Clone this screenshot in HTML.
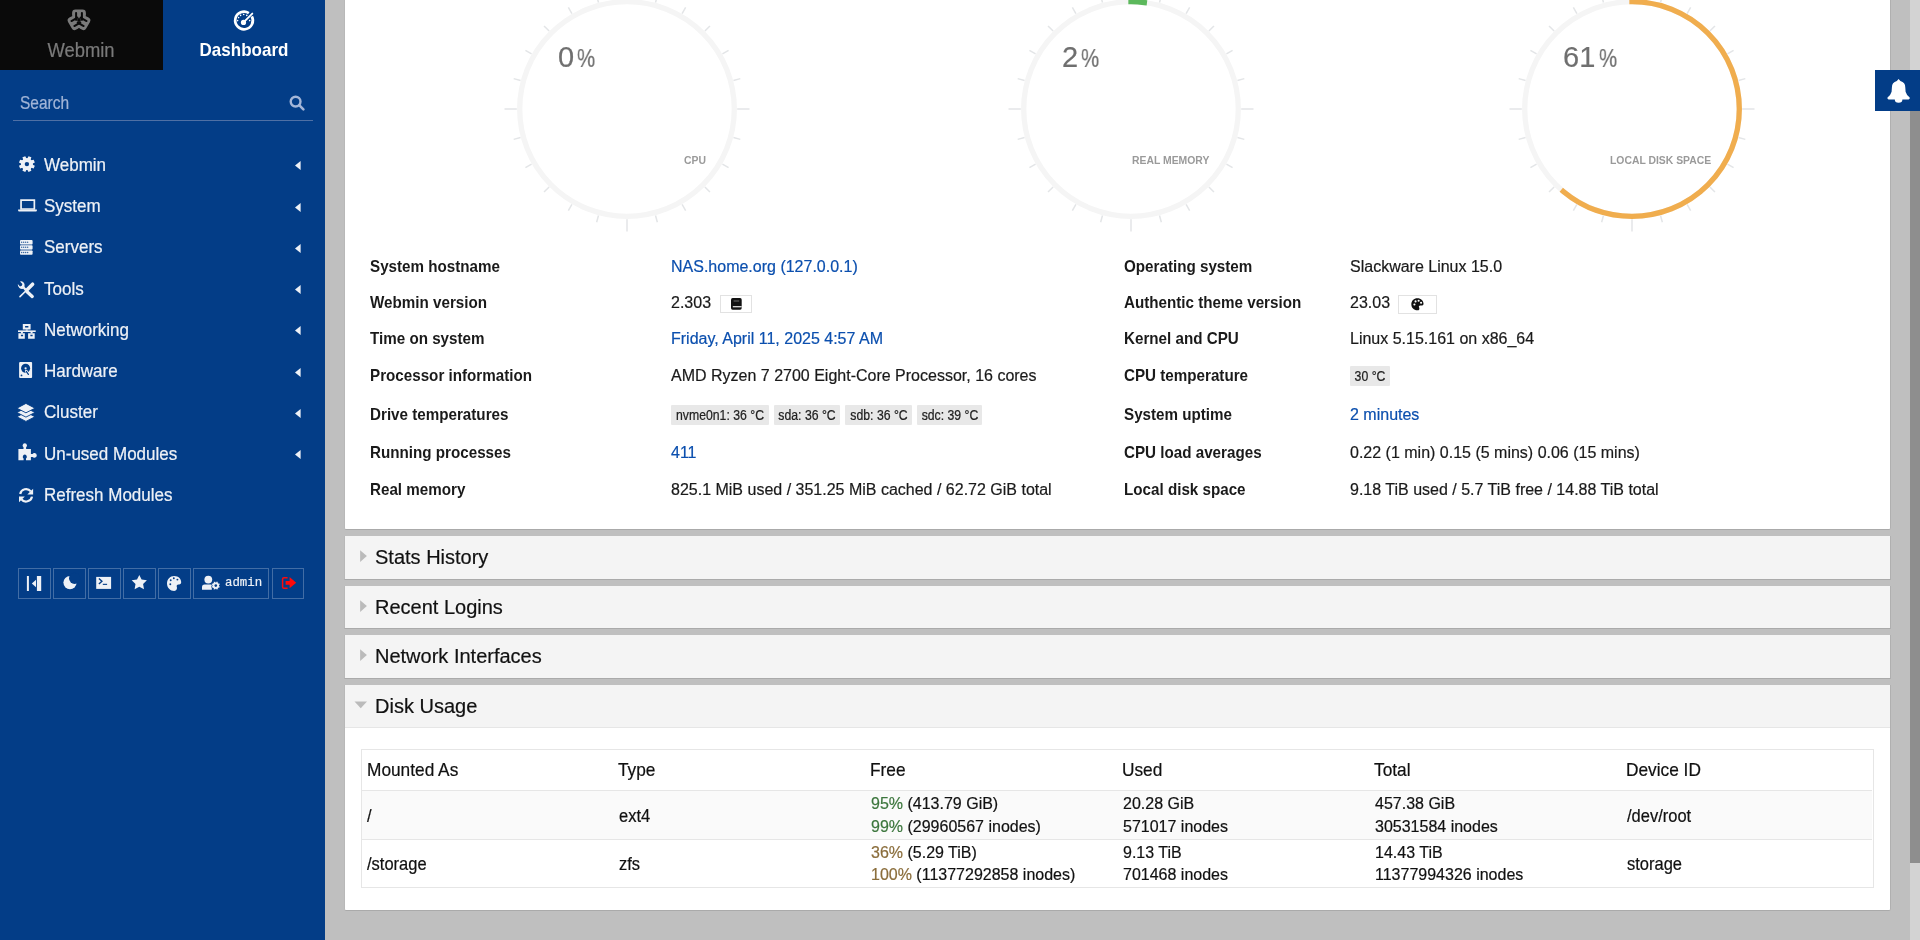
<!DOCTYPE html>
<html><head><meta charset="utf-8"><title>Dashboard</title>
<style>
html,body{margin:0;padding:0;width:1920px;height:940px;overflow:hidden;background:#bfbfbf;font-family:"Liberation Sans", sans-serif;}
.r{position:absolute;box-sizing:content-box;}
.t{position:absolute;white-space:nowrap;font-family:"Liberation Sans", sans-serif;will-change:transform;-webkit-text-stroke:0.2px currentColor;}
.t[style*="font-weight:bold"]{-webkit-text-stroke:0;}
svg.r{overflow:visible}
</style></head><body>
<div class="r" style="left:0;top:0;width:325px;height:940px;background:#033d87"></div><div class="r" style="left:0;top:0;width:163px;height:70px;background:#0a0a0a"></div><div class="t" style="left:-118.80px;width:400px;text-align:center;top:42px;font-size:18.4px;line-height:18.4px;color:#7a7a7a;font-weight:normal;transform:scaleY(1.1);transform-origin:0 15px;">Webmin</div><div class="t" style="left:44.00px;width:400px;text-align:center;top:42px;font-size:17px;line-height:17px;color:#ffffff;font-weight:bold;transform:scaleY(1.12);transform-origin:0 14px;">Dashboard</div><svg class="r" style="left:59px;top:-0.2px" width="40" height="40" viewBox="-20 -20 40 40"><g fill="#7a7a7a"><circle r="4.6"/><g transform="rotate(0)"><rect x="-6.9" y="-10.5" width="13.8" height="8.6" rx="3.4"/><rect x="-5.6" y="-6" width="11.2" height="6" /></g><g transform="rotate(120)"><rect x="-6.9" y="-10.5" width="13.8" height="8.6" rx="3.4"/><rect x="-5.6" y="-6" width="11.2" height="6" /></g><g transform="rotate(240)"><rect x="-6.9" y="-10.5" width="13.8" height="8.6" rx="3.4"/><rect x="-5.6" y="-6" width="11.2" height="6" /></g></g><g fill="#0a0a0a"><circle r="1.9"/><g transform="rotate(0)"><rect x="-3.9" y="-8" width="2" height="8.8" rx="0.9"/><rect x="1.9" y="-8" width="2" height="8.8" rx="0.9"/></g><g transform="rotate(120)"><rect x="-3.9" y="-8" width="2" height="8.8" rx="0.9"/><rect x="1.9" y="-8" width="2" height="8.8" rx="0.9"/></g><g transform="rotate(240)"><rect x="-3.9" y="-8" width="2" height="8.8" rx="0.9"/><rect x="1.9" y="-8" width="2" height="8.8" rx="0.9"/></g></g></svg><svg class="r" style="left:225px;top:0px" width="40" height="40" viewBox="225 0 40 40"><path d="M251.86 16.30 A8.85 8.85 0 1 1 248.87 13.03" fill="none" stroke="#fff" stroke-width="2.7"/><circle cx="243.5" cy="22.4" r="2.6" fill="#fff"/><path d="M243.5 22.4 L252.3 13.6" stroke="#fff" stroke-width="1.9" stroke-linecap="round"/><circle cx="237.6" cy="20.6" r="0.8" fill="#fff"/><circle cx="238.6" cy="17.6" r="0.8" fill="#fff"/><circle cx="240.6" cy="15.4" r="0.8" fill="#fff"/><circle cx="243.7" cy="14.5" r="0.8" fill="#fff"/><circle cx="246.8" cy="15.4" r="0.8" fill="#fff"/><circle cx="249.7" cy="20.6" r="0.8" fill="#fff"/></svg><div class="t" style="left:20.00px;top:96px;font-size:15.5px;line-height:15.5px;color:#a2b5d7;font-weight:normal;transform:scaleY(1.15);transform-origin:0 13px;">Search</div><div class="r" style="left:13px;top:120px;width:300px;height:1px;background:#4f70a5"></div><svg class="r" style="left:289px;top:95px" width="16" height="16" viewBox="0 0 16 16">
<circle cx="6.6" cy="6.6" r="4.9" fill="none" stroke="#a4b6d8" stroke-width="2.4"/>
<path d="M10.2 10.2 L14.4 14.4" stroke="#a4b6d8" stroke-width="2.6" stroke-linecap="round"/></svg><svg class="r" style="left:0;top:0" width="325" height="620" viewBox="0 0 325 620"><path fill-rule="evenodd" fill="#eef1f6" d="M27.47 158.23 L28.51 156.16 L31.37 157.35 L30.65 159.55 L31.45 160.35 L33.65 159.63 L34.84 162.49 L32.77 163.53 L32.77 164.67 L34.84 165.71 L33.65 168.57 L31.45 167.85 L30.65 168.65 L31.37 170.85 L28.51 172.04 L27.47 169.97 L26.33 169.97 L25.29 172.04 L22.43 170.85 L23.15 168.65 L22.35 167.85 L20.15 168.57 L18.96 165.71 L21.03 164.67 L21.03 163.53 L18.96 162.49 L20.15 159.63 L22.35 160.35 L23.15 159.55 L22.43 157.35 L25.29 156.16 L26.33 158.23 Z M29.20 164.10 A2.3 2.3 0 1 0 24.60 164.10 A2.3 2.3 0 1 0 29.20 164.10 Z"/><circle cx="26.9" cy="164.1" r="5.9" fill="#eef1f6"/><circle cx="26.9" cy="164.1" r="2.2" fill="#033d87"/><path fill="#eef1f6" fill-rule="evenodd" d="M20.2 199.2 H35.2 V209.8 H20.2 Z M21.9 200.9 V208.2 H33.5 V200.9 Z"/><path fill="#eef1f6" d="M18.1 209.6 H36.9 V210.6 Q36.9 211.6 35.9 211.6 H19.1 Q18.1 211.6 18.1 210.6 Z"/><rect x="20" y="240" width="12.6" height="4.3" rx="0.9" fill="#eef1f6"/><circle cx="21.6" cy="242.15" r="0.75" fill="#033d87" opacity="0.75"/><circle cx="23.6" cy="242.15" r="0.75" fill="#033d87" opacity="0.75"/><circle cx="25.6" cy="242.15" r="0.75" fill="#033d87" opacity="0.75"/><circle cx="27.6" cy="242.15" r="0.75" fill="#033d87" opacity="0.75"/><rect x="20" y="245.2" width="12.6" height="4.3" rx="0.9" fill="#eef1f6"/><circle cx="21.6" cy="247.35" r="0.75" fill="#033d87" opacity="0.75"/><circle cx="23.6" cy="247.35" r="0.75" fill="#033d87" opacity="0.75"/><circle cx="25.6" cy="247.35" r="0.75" fill="#033d87" opacity="0.75"/><circle cx="27.6" cy="247.35" r="0.75" fill="#033d87" opacity="0.75"/><rect x="20" y="250.4" width="12.6" height="4.3" rx="0.9" fill="#eef1f6"/><circle cx="21.6" cy="252.55" r="0.75" fill="#033d87" opacity="0.75"/><circle cx="23.6" cy="252.55" r="0.75" fill="#033d87" opacity="0.75"/><circle cx="25.6" cy="252.55" r="0.75" fill="#033d87" opacity="0.75"/><circle cx="27.6" cy="252.55" r="0.75" fill="#033d87" opacity="0.75"/><rect x="20.5" y="244.3" width="11.6" height="0.9" fill="#eef1f6" opacity="0.55"/><rect x="20.5" y="249.5" width="11.6" height="0.9" fill="#eef1f6" opacity="0.55"/><line x1="32.6" y1="284.2" x2="26.6" y2="290.2" stroke="#eef1f6" stroke-width="3.6" stroke-linecap="round"/><line x1="26.8" y1="290" x2="20" y2="296.6" stroke="#eef1f6" stroke-width="1.6" stroke-linecap="round"/><line x1="26.8" y1="291.6" x2="32.2" y2="296.4" stroke="#eef1f6" stroke-width="3.4" stroke-linecap="round"/><path fill="#eef1f6" d="M24.8 290.4 L26.4 288.8 L24.6 287 Q25.4 284 23.4 282.2 Q21.6 280.9 20 281.6 L22.4 284 L21.8 285.8 L20 286.4 L17.8 284 Q17.6 286.6 19.4 288 Q21 289.2 23.2 288.8 Z"/><path fill="#eef1f6" fill-rule="evenodd" d="M22.8 324 H30.6 V329.6 H22.8 Z M25.1 326 V327.6 H28.4 V326 Z"/><rect x="25.8" y="329.4" width="2" height="1.4" fill="#eef1f6" opacity="0.8"/><rect x="18" y="330.4" width="17.7" height="1.6" fill="#eef1f6"/><rect x="20.9" y="331.8" width="2" height="1.6" fill="#eef1f6"/><rect x="30.6" y="331.8" width="2" height="1.6" fill="#eef1f6"/><path fill="#eef1f6" fill-rule="evenodd" d="M18.4 333.2 H24.8 V338.7 H18.4 Z M20.9 334.8 V336.3 H23.1 V334.8 Z"/><path fill="#eef1f6" fill-rule="evenodd" d="M28.1 333.2 H34.7 V338.7 H28.1 Z M30.4 334.8 V336.3 H32.6 V334.8 Z"/><rect x="19.1" y="362" width="13" height="15.9" rx="1" fill="#eef1f6"/><circle cx="25.6" cy="368.3" r="4.5" fill="#033d87"/><circle cx="25.6" cy="368.3" r="1.1" fill="#eef1f6"/><line x1="26.2" y1="371" x2="28.6" y2="374.6" stroke="#eef1f6" stroke-width="2.6" stroke-linecap="round"/><line x1="26.3" y1="371.4" x2="28.4" y2="374.4" stroke="#033d87" stroke-width="1.2" stroke-linecap="round"/><circle cx="21.5" cy="375.4" r="0.9" fill="#033d87"/><path fill="#eef1f6" stroke="#033d87" stroke-width="0.9" d="M25.95 412.00 L35 416.80 L25.95 421.40 L16.9 416.80 Z"/><path fill="#eef1f6" stroke="#033d87" stroke-width="0.9" d="M25.95 407.70 L35 412.50 L25.95 417.10 L16.9 412.50 Z"/><path fill="#eef1f6" stroke="#033d87" stroke-width="0.9" d="M25.95 403.40 L35 408.20 L25.95 412.80 L16.9 408.20 Z"/><path fill="#eef1f6" d="M18.4 448.9 H23.5 V447.2 Q22.4 446.4 22.6 445.2 Q23 443.2 24.8 443.2 Q26.6 443.2 27 445.2 Q27.2 446.4 26.1 447.2 V448.9 H30.9 V453.9 H32.6 Q33.2 453 34.6 453.1 Q36.8 453.4 36.8 455.4 Q36.8 457.4 34.6 457.7 Q33.2 457.8 32.6 456.9 H30.9 V460.3 H26 V458.6 Q27 457.9 26.8 456.6 Q26.4 454.4 24.8 454.4 Q23.2 454.4 22.8 456.6 Q22.6 457.9 23.6 458.6 V460.3 H18.4 Z"/><path fill="none" stroke="#eef1f6" stroke-width="2.2" d="M20.2 494 A6 6 0 0 1 30.8 491.4"/><path fill="none" stroke="#eef1f6" stroke-width="2.2" d="M32 496.6 A6 6 0 0 1 21.4 499.2"/><path fill="#eef1f6" d="M33.1 488.8 V494.6 H27.3 Z"/><path fill="#eef1f6" d="M19 502.2 V496.4 H24.8 Z"/></svg><div class="t" style="left:44.00px;top:157px;font-size:17px;line-height:17px;color:#eef1f6;font-weight:normal;transform:scaleY(1.1);transform-origin:0 14px;">Webmin</div><svg class="r" style="left:294.5px;top:161.40px" width="6" height="9" viewBox="0 0 6 9"><path d="M5.6 0 V9 L0 4.5 Z" fill="#eef1f6"/></svg><div class="t" style="left:44.00px;top:198px;font-size:17px;line-height:17px;color:#eef1f6;font-weight:normal;transform:scaleY(1.1);transform-origin:0 14px;">System</div><svg class="r" style="left:294.5px;top:202.64px" width="6" height="9" viewBox="0 0 6 9"><path d="M5.6 0 V9 L0 4.5 Z" fill="#eef1f6"/></svg><div class="t" style="left:44.00px;top:239px;font-size:17px;line-height:17px;color:#eef1f6;font-weight:normal;transform:scaleY(1.1);transform-origin:0 14px;">Servers</div><svg class="r" style="left:294.5px;top:243.88px" width="6" height="9" viewBox="0 0 6 9"><path d="M5.6 0 V9 L0 4.5 Z" fill="#eef1f6"/></svg><div class="t" style="left:44.00px;top:281px;font-size:17px;line-height:17px;color:#eef1f6;font-weight:normal;transform:scaleY(1.1);transform-origin:0 14px;">Tools</div><svg class="r" style="left:294.5px;top:285.12px" width="6" height="9" viewBox="0 0 6 9"><path d="M5.6 0 V9 L0 4.5 Z" fill="#eef1f6"/></svg><div class="t" style="left:44.00px;top:322px;font-size:17px;line-height:17px;color:#eef1f6;font-weight:normal;transform:scaleY(1.1);transform-origin:0 14px;">Networking</div><svg class="r" style="left:294.5px;top:326.36px" width="6" height="9" viewBox="0 0 6 9"><path d="M5.6 0 V9 L0 4.5 Z" fill="#eef1f6"/></svg><div class="t" style="left:44.00px;top:363px;font-size:17px;line-height:17px;color:#eef1f6;font-weight:normal;transform:scaleY(1.1);transform-origin:0 14px;">Hardware</div><svg class="r" style="left:294.5px;top:367.60px" width="6" height="9" viewBox="0 0 6 9"><path d="M5.6 0 V9 L0 4.5 Z" fill="#eef1f6"/></svg><div class="t" style="left:44.00px;top:404px;font-size:17px;line-height:17px;color:#eef1f6;font-weight:normal;transform:scaleY(1.1);transform-origin:0 14px;">Cluster</div><svg class="r" style="left:294.5px;top:408.84px" width="6" height="9" viewBox="0 0 6 9"><path d="M5.6 0 V9 L0 4.5 Z" fill="#eef1f6"/></svg><div class="t" style="left:44.00px;top:446px;font-size:17px;line-height:17px;color:#eef1f6;font-weight:normal;transform:scaleY(1.1);transform-origin:0 14px;">Un-used Modules</div><svg class="r" style="left:294.5px;top:450.08px" width="6" height="9" viewBox="0 0 6 9"><path d="M5.6 0 V9 L0 4.5 Z" fill="#eef1f6"/></svg><div class="t" style="left:44.00px;top:487px;font-size:17px;line-height:17px;color:#eef1f6;font-weight:normal;transform:scaleY(1.1);transform-origin:0 14px;">Refresh Modules</div><div class="r" style="left:18px;top:568px;width:31px;height:29px;border:1px solid rgba(255,255,255,0.25)"></div><div class="r" style="left:53px;top:568px;width:31px;height:29px;border:1px solid rgba(255,255,255,0.25)"></div><div class="r" style="left:88px;top:568px;width:31px;height:29px;border:1px solid rgba(255,255,255,0.25)"></div><div class="r" style="left:123px;top:568px;width:31px;height:29px;border:1px solid rgba(255,255,255,0.25)"></div><div class="r" style="left:158px;top:568px;width:31px;height:29px;border:1px solid rgba(255,255,255,0.25)"></div><div class="r" style="left:193px;top:568px;width:74px;height:29px;border:1px solid rgba(255,255,255,0.25)"></div><div class="r" style="left:272px;top:568px;width:30px;height:29px;border:1px solid rgba(255,255,255,0.25)"></div><svg class="r" style="left:0;top:0" width="325" height="620" viewBox="0 0 325 620"><rect x="26.9" y="576" width="2" height="15" fill="#eef1f6"/><rect x="36.9" y="576" width="4.3" height="15" fill="#eef1f6"/><path d="M31.8 583.5 L36 579.8 V587.2 Z" fill="#eef1f6"/><circle cx="70" cy="582.6" r="6.6" fill="#eef1f6"/><circle cx="74.6" cy="578.3" r="5.6" fill="#033d87"/><rect x="96.2" y="576.9" width="14.9" height="12" fill="#eef1f6"/><path d="M98.9 578.5 L101.9 581.2 L98.9 583.9" fill="none" stroke="#033d87" stroke-width="1.4"/><rect x="102.8" y="583.8" width="4.3" height="1.1" fill="#033d87"/><path fill="#eef1f6" d="M139.3 574.9 L141.6 579.6 L146.9 580.3 L143.1 583.9 L144 589.2 L139.3 586.7 L134.6 589.2 L135.5 583.9 L131.7 580.3 L137 579.6 Z"/><path fill="#eef1f6" d="M174.2 576 C178.4 576 181.2 578.8 181.2 582.2 C181.2 584.2 179.6 584.4 178.4 584.4 C177 584.4 176.4 585.4 176.8 586.8 C177.4 588.6 176.6 591 174.2 591 C170.2 591 167 587.6 167 583.5 C167 579.4 170 576 174.2 576 Z"/><circle cx="170.3" cy="584.2" r="0.95" fill="#033d87"/><circle cx="170.7" cy="580.2" r="0.95" fill="#033d87"/><circle cx="173.8" cy="578.2" r="0.95" fill="#033d87"/><circle cx="177.4" cy="579.6" r="0.95" fill="#033d87"/><circle cx="208.3" cy="579.6" r="3.9" fill="#eef1f6"/><path fill="#eef1f6" d="M202 589.8 V587 Q202 584.4 204.6 584.4 H211.8 V589.8 Z"/><path fill-rule="evenodd" fill="#eef1f6" d="M216.05 582.41 L216.60 581.27 L218.29 581.97 L217.88 583.17 L218.23 583.52 L219.43 583.11 L220.13 584.80 L218.99 585.35 L218.99 585.85 L220.13 586.40 L219.43 588.09 L218.23 587.68 L217.88 588.03 L218.29 589.23 L216.60 589.93 L216.05 588.79 L215.55 588.79 L215.00 589.93 L213.31 589.23 L213.72 588.03 L213.37 587.68 L212.17 588.09 L211.47 586.40 L212.61 585.85 L212.61 585.35 L211.47 584.80 L212.17 583.11 L213.37 583.52 L213.72 583.17 L213.31 581.97 L215.00 581.27 L215.55 582.41 Z M217.10 585.60 A1.3 1.3 0 1 0 214.50 585.60 A1.3 1.3 0 1 0 217.10 585.60 Z" stroke="#033d87" stroke-width="0.6"/><circle cx="215.8" cy="585.6" r="3.2" fill="#eef1f6"/><circle cx="215.8" cy="585.6" r="1.3" fill="#033d87"/><path d="M287.6 577.7 H284 Q282.6 577.7 282.6 579.1 V586.9 Q282.6 588.3 284 588.3 H287.6" fill="none" stroke="#ff0a0a" stroke-width="1.5"/><path d="M285.6 581.1 H289.6 V577 L296.2 582.7 L289.6 588.3 V584.8 H285.6 Z" fill="#ff0a0a"/></svg><div class="t" style="left:224.60px;top:577px;font-size:12.4px;line-height:12.4px;color:#eef1f6;font-weight:normal;font-family:'Liberation Mono', monospace;">admin</div><div class="r" style="left:325px;top:0;width:1595px;height:940px;background:#bfbfbf"></div><div class="r" style="left:344px;top:-10px;width:1545px;height:539px;background:#fff;border-right:1px solid #b0b0b0;border-bottom:1px solid #aaaaaa;border-left:1px solid #b8b8b8;border-radius:0 0 2px 2px"></div><svg class="r" style="left:497.00px;top:-21.50px" width="260" height="260" viewBox="-130 -130 260 260"><circle cx="0" cy="0" r="107.3" fill="none" stroke="#f5f5f5" stroke-width="5.3"/><line x1="110.20" y1="0.00" x2="122.50" y2="0.00" stroke="#e3e5e7" stroke-width="1.5"/><line x1="106.45" y1="28.52" x2="113.30" y2="30.36" stroke="#e3e5e7" stroke-width="1.5"/><line x1="95.44" y1="55.10" x2="101.58" y2="58.65" stroke="#e3e5e7" stroke-width="1.5"/><line x1="77.92" y1="77.92" x2="82.94" y2="82.94" stroke="#e3e5e7" stroke-width="1.5"/><line x1="55.10" y1="95.44" x2="58.65" y2="101.58" stroke="#e3e5e7" stroke-width="1.5"/><line x1="28.52" y1="106.45" x2="30.36" y2="113.30" stroke="#e3e5e7" stroke-width="1.5"/><line x1="0.00" y1="110.20" x2="0.00" y2="122.50" stroke="#e3e5e7" stroke-width="1.5"/><line x1="-28.52" y1="106.45" x2="-30.36" y2="113.30" stroke="#e3e5e7" stroke-width="1.5"/><line x1="-55.10" y1="95.44" x2="-58.65" y2="101.58" stroke="#e3e5e7" stroke-width="1.5"/><line x1="-77.92" y1="77.92" x2="-82.94" y2="82.94" stroke="#e3e5e7" stroke-width="1.5"/><line x1="-95.44" y1="55.10" x2="-101.58" y2="58.65" stroke="#e3e5e7" stroke-width="1.5"/><line x1="-106.45" y1="28.52" x2="-113.30" y2="30.36" stroke="#e3e5e7" stroke-width="1.5"/><line x1="-110.20" y1="0.00" x2="-122.50" y2="0.00" stroke="#e3e5e7" stroke-width="1.5"/><line x1="-106.45" y1="-28.52" x2="-113.30" y2="-30.36" stroke="#e3e5e7" stroke-width="1.5"/><line x1="-95.44" y1="-55.10" x2="-101.58" y2="-58.65" stroke="#e3e5e7" stroke-width="1.5"/><line x1="-77.92" y1="-77.92" x2="-82.94" y2="-82.94" stroke="#e3e5e7" stroke-width="1.5"/><line x1="-55.10" y1="-95.44" x2="-58.65" y2="-101.58" stroke="#e3e5e7" stroke-width="1.5"/><line x1="-28.52" y1="-106.45" x2="-30.36" y2="-113.30" stroke="#e3e5e7" stroke-width="1.5"/><line x1="-0.00" y1="-110.20" x2="-0.00" y2="-122.50" stroke="#e3e5e7" stroke-width="1.5"/><line x1="28.52" y1="-106.45" x2="30.36" y2="-113.30" stroke="#e3e5e7" stroke-width="1.5"/><line x1="55.10" y1="-95.44" x2="58.65" y2="-101.58" stroke="#e3e5e7" stroke-width="1.5"/><line x1="77.92" y1="-77.92" x2="82.94" y2="-82.94" stroke="#e3e5e7" stroke-width="1.5"/><line x1="95.44" y1="-55.10" x2="101.58" y2="-58.65" stroke="#e3e5e7" stroke-width="1.5"/><line x1="106.45" y1="-28.52" x2="113.30" y2="-30.36" stroke="#e3e5e7" stroke-width="1.5"/></svg><div class="t" style="left:558.00px;top:43px;font-size:29px;line-height:29px;color:#6f6f6f;font-weight:normal;">0</div><div class="t" style="left:577.30px;top:46px;font-size:25.5px;line-height:25.5px;color:#6f6f6f;font-weight:normal;transform:scaleX(0.8);transform-origin:0 0;">%</div><div class="t" style="right:1214.40px;top:156px;font-size:10.4px;line-height:10.4px;color:#9a9a9a;font-weight:bold;transform:scaleY(1.12);transform-origin:0 8px;">CPU</div><svg class="r" style="left:1000.60px;top:-21.50px" width="260" height="260" viewBox="-130 -130 260 260"><circle cx="0" cy="0" r="107.3" fill="none" stroke="#f5f5f5" stroke-width="5.3"/><circle cx="0" cy="0" r="107.3" fill="none" stroke="#5cb85c" stroke-width="5.3" stroke-linecap="square" stroke-dasharray="13.48 674.19" transform="rotate(-90)"/><line x1="110.20" y1="0.00" x2="122.50" y2="0.00" stroke="#e3e5e7" stroke-width="1.5"/><line x1="106.45" y1="28.52" x2="113.30" y2="30.36" stroke="#e3e5e7" stroke-width="1.5"/><line x1="95.44" y1="55.10" x2="101.58" y2="58.65" stroke="#e3e5e7" stroke-width="1.5"/><line x1="77.92" y1="77.92" x2="82.94" y2="82.94" stroke="#e3e5e7" stroke-width="1.5"/><line x1="55.10" y1="95.44" x2="58.65" y2="101.58" stroke="#e3e5e7" stroke-width="1.5"/><line x1="28.52" y1="106.45" x2="30.36" y2="113.30" stroke="#e3e5e7" stroke-width="1.5"/><line x1="0.00" y1="110.20" x2="0.00" y2="122.50" stroke="#e3e5e7" stroke-width="1.5"/><line x1="-28.52" y1="106.45" x2="-30.36" y2="113.30" stroke="#e3e5e7" stroke-width="1.5"/><line x1="-55.10" y1="95.44" x2="-58.65" y2="101.58" stroke="#e3e5e7" stroke-width="1.5"/><line x1="-77.92" y1="77.92" x2="-82.94" y2="82.94" stroke="#e3e5e7" stroke-width="1.5"/><line x1="-95.44" y1="55.10" x2="-101.58" y2="58.65" stroke="#e3e5e7" stroke-width="1.5"/><line x1="-106.45" y1="28.52" x2="-113.30" y2="30.36" stroke="#e3e5e7" stroke-width="1.5"/><line x1="-110.20" y1="0.00" x2="-122.50" y2="0.00" stroke="#e3e5e7" stroke-width="1.5"/><line x1="-106.45" y1="-28.52" x2="-113.30" y2="-30.36" stroke="#e3e5e7" stroke-width="1.5"/><line x1="-95.44" y1="-55.10" x2="-101.58" y2="-58.65" stroke="#e3e5e7" stroke-width="1.5"/><line x1="-77.92" y1="-77.92" x2="-82.94" y2="-82.94" stroke="#e3e5e7" stroke-width="1.5"/><line x1="-55.10" y1="-95.44" x2="-58.65" y2="-101.58" stroke="#e3e5e7" stroke-width="1.5"/><line x1="-28.52" y1="-106.45" x2="-30.36" y2="-113.30" stroke="#e3e5e7" stroke-width="1.5"/><line x1="-0.00" y1="-110.20" x2="-0.00" y2="-122.50" stroke="#e3e5e7" stroke-width="1.5"/><line x1="28.52" y1="-106.45" x2="30.36" y2="-113.30" stroke="#e3e5e7" stroke-width="1.5"/><line x1="55.10" y1="-95.44" x2="58.65" y2="-101.58" stroke="#e3e5e7" stroke-width="1.5"/><line x1="77.92" y1="-77.92" x2="82.94" y2="-82.94" stroke="#e3e5e7" stroke-width="1.5"/><line x1="95.44" y1="-55.10" x2="101.58" y2="-58.65" stroke="#e3e5e7" stroke-width="1.5"/><line x1="106.45" y1="-28.52" x2="113.30" y2="-30.36" stroke="#e3e5e7" stroke-width="1.5"/></svg><div class="t" style="left:1061.60px;top:43px;font-size:29px;line-height:29px;color:#6f6f6f;font-weight:normal;">2</div><div class="t" style="left:1080.90px;top:46px;font-size:25.5px;line-height:25.5px;color:#6f6f6f;font-weight:normal;transform:scaleX(0.8);transform-origin:0 0;">%</div><div class="t" style="right:710.80px;top:156px;font-size:10.4px;line-height:10.4px;color:#9a9a9a;font-weight:bold;transform:scaleY(1.12);transform-origin:0 8px;">REAL MEMORY</div><svg class="r" style="left:1502.20px;top:-21.50px" width="260" height="260" viewBox="-130 -130 260 260"><circle cx="0" cy="0" r="107.3" fill="none" stroke="#f5f5f5" stroke-width="5.3"/><circle cx="0" cy="0" r="107.3" fill="none" stroke="#f0ad4e" stroke-width="5.3" stroke-linecap="square" stroke-dasharray="411.25 674.19" transform="rotate(-90)"/><line x1="110.20" y1="0.00" x2="122.50" y2="0.00" stroke="#e3e5e7" stroke-width="1.5"/><line x1="106.45" y1="28.52" x2="113.30" y2="30.36" stroke="#e3e5e7" stroke-width="1.5"/><line x1="95.44" y1="55.10" x2="101.58" y2="58.65" stroke="#e3e5e7" stroke-width="1.5"/><line x1="77.92" y1="77.92" x2="82.94" y2="82.94" stroke="#e3e5e7" stroke-width="1.5"/><line x1="55.10" y1="95.44" x2="58.65" y2="101.58" stroke="#e3e5e7" stroke-width="1.5"/><line x1="28.52" y1="106.45" x2="30.36" y2="113.30" stroke="#e3e5e7" stroke-width="1.5"/><line x1="0.00" y1="110.20" x2="0.00" y2="122.50" stroke="#e3e5e7" stroke-width="1.5"/><line x1="-28.52" y1="106.45" x2="-30.36" y2="113.30" stroke="#e3e5e7" stroke-width="1.5"/><line x1="-55.10" y1="95.44" x2="-58.65" y2="101.58" stroke="#e3e5e7" stroke-width="1.5"/><line x1="-77.92" y1="77.92" x2="-82.94" y2="82.94" stroke="#e3e5e7" stroke-width="1.5"/><line x1="-95.44" y1="55.10" x2="-101.58" y2="58.65" stroke="#e3e5e7" stroke-width="1.5"/><line x1="-106.45" y1="28.52" x2="-113.30" y2="30.36" stroke="#e3e5e7" stroke-width="1.5"/><line x1="-110.20" y1="0.00" x2="-122.50" y2="0.00" stroke="#e3e5e7" stroke-width="1.5"/><line x1="-106.45" y1="-28.52" x2="-113.30" y2="-30.36" stroke="#e3e5e7" stroke-width="1.5"/><line x1="-95.44" y1="-55.10" x2="-101.58" y2="-58.65" stroke="#e3e5e7" stroke-width="1.5"/><line x1="-77.92" y1="-77.92" x2="-82.94" y2="-82.94" stroke="#e3e5e7" stroke-width="1.5"/><line x1="-55.10" y1="-95.44" x2="-58.65" y2="-101.58" stroke="#e3e5e7" stroke-width="1.5"/><line x1="-28.52" y1="-106.45" x2="-30.36" y2="-113.30" stroke="#e3e5e7" stroke-width="1.5"/><line x1="-0.00" y1="-110.20" x2="-0.00" y2="-122.50" stroke="#e3e5e7" stroke-width="1.5"/><line x1="28.52" y1="-106.45" x2="30.36" y2="-113.30" stroke="#e3e5e7" stroke-width="1.5"/><line x1="55.10" y1="-95.44" x2="58.65" y2="-101.58" stroke="#e3e5e7" stroke-width="1.5"/><line x1="77.92" y1="-77.92" x2="82.94" y2="-82.94" stroke="#e3e5e7" stroke-width="1.5"/><line x1="95.44" y1="-55.10" x2="101.58" y2="-58.65" stroke="#e3e5e7" stroke-width="1.5"/><line x1="106.45" y1="-28.52" x2="113.30" y2="-30.36" stroke="#e3e5e7" stroke-width="1.5"/></svg><div class="t" style="left:1563.20px;top:43px;font-size:29px;line-height:29px;color:#6f6f6f;font-weight:normal;">61</div><div class="t" style="left:1598.70px;top:46px;font-size:25.5px;line-height:25.5px;color:#6f6f6f;font-weight:normal;transform:scaleX(0.8);transform-origin:0 0;">%</div><div class="t" style="right:209.20px;top:156px;font-size:10.4px;line-height:10.4px;color:#9a9a9a;font-weight:bold;transform:scaleY(1.12);transform-origin:0 8px;">LOCAL DISK SPACE</div><div class="t" style="left:370.00px;top:259px;font-size:15.2px;line-height:15.2px;color:#1a1a1a;font-weight:bold;transform:scaleY(1.1);transform-origin:0 13px;">System hostname</div><div class="t" style="left:671.00px;top:259px;font-size:16px;line-height:16px;color:#1a1a1a;font-weight:normal;transform:scaleY(1.08);transform-origin:0 13px;"><span style="color:#0b4fae">NAS.home.org (127.0.0.1)</span></div><div class="t" style="left:1124.00px;top:259px;font-size:15.2px;line-height:15.2px;color:#1a1a1a;font-weight:bold;transform:scaleY(1.1);transform-origin:0 13px;">Operating system</div><div class="t" style="left:1350.00px;top:259px;font-size:16px;line-height:16px;color:#1a1a1a;font-weight:normal;transform:scaleY(1.08);transform-origin:0 13px;">Slackware Linux 15.0</div><div class="t" style="left:370.00px;top:295px;font-size:15.2px;line-height:15.2px;color:#1a1a1a;font-weight:bold;transform:scaleY(1.1);transform-origin:0 13px;">Webmin version</div><div class="t" style="left:671.00px;top:295px;font-size:16px;line-height:16px;color:#1a1a1a;font-weight:normal;transform:scaleY(1.08);transform-origin:0 13px;">2.303</div><div class="t" style="left:1124.00px;top:295px;font-size:15.2px;line-height:15.2px;color:#1a1a1a;font-weight:bold;transform:scaleY(1.1);transform-origin:0 13px;">Authentic theme version</div><div class="t" style="left:1350.00px;top:295px;font-size:16px;line-height:16px;color:#1a1a1a;font-weight:normal;transform:scaleY(1.08);transform-origin:0 13px;">23.03</div><div class="t" style="left:370.00px;top:331px;font-size:15.2px;line-height:15.2px;color:#1a1a1a;font-weight:bold;transform:scaleY(1.1);transform-origin:0 13px;">Time on system</div><div class="t" style="left:671.00px;top:331px;font-size:16px;line-height:16px;color:#1a1a1a;font-weight:normal;transform:scaleY(1.08);transform-origin:0 13px;"><span style="color:#0b4fae">Friday, April 11, 2025 4:57 AM</span></div><div class="t" style="left:1124.00px;top:331px;font-size:15.2px;line-height:15.2px;color:#1a1a1a;font-weight:bold;transform:scaleY(1.1);transform-origin:0 13px;">Kernel and CPU</div><div class="t" style="left:1350.00px;top:331px;font-size:16px;line-height:16px;color:#1a1a1a;font-weight:normal;transform:scaleY(1.08);transform-origin:0 13px;">Linux 5.15.161 on x86_64</div><div class="t" style="left:370.00px;top:368px;font-size:15.2px;line-height:15.2px;color:#1a1a1a;font-weight:bold;transform:scaleY(1.1);transform-origin:0 13px;">Processor information</div><div class="t" style="left:671.00px;top:368px;font-size:16px;line-height:16px;color:#1a1a1a;font-weight:normal;transform:scaleY(1.08);transform-origin:0 13px;">AMD Ryzen 7 2700 Eight-Core Processor, 16 cores</div><div class="t" style="left:1124.00px;top:368px;font-size:15.2px;line-height:15.2px;color:#1a1a1a;font-weight:bold;transform:scaleY(1.1);transform-origin:0 13px;">CPU temperature</div><div class="t" style="left:370.00px;top:407px;font-size:15.2px;line-height:15.2px;color:#1a1a1a;font-weight:bold;transform:scaleY(1.1);transform-origin:0 13px;">Drive temperatures</div><div class="t" style="left:1124.00px;top:407px;font-size:15.2px;line-height:15.2px;color:#1a1a1a;font-weight:bold;transform:scaleY(1.1);transform-origin:0 13px;">System uptime</div><div class="t" style="left:1350.00px;top:407px;font-size:16px;line-height:16px;color:#1a1a1a;font-weight:normal;transform:scaleY(1.08);transform-origin:0 13px;"><span style="color:#0b4fae">2 minutes</span></div><div class="t" style="left:370.00px;top:445px;font-size:15.2px;line-height:15.2px;color:#1a1a1a;font-weight:bold;transform:scaleY(1.1);transform-origin:0 13px;">Running processes</div><div class="t" style="left:671.00px;top:445px;font-size:16px;line-height:16px;color:#1a1a1a;font-weight:normal;transform:scaleY(1.08);transform-origin:0 13px;"><span style="color:#0b4fae">411</span></div><div class="t" style="left:1124.00px;top:445px;font-size:15.2px;line-height:15.2px;color:#1a1a1a;font-weight:bold;transform:scaleY(1.1);transform-origin:0 13px;">CPU load averages</div><div class="t" style="left:1350.00px;top:445px;font-size:16px;line-height:16px;color:#1a1a1a;font-weight:normal;transform:scaleY(1.08);transform-origin:0 13px;">0.22 (1 min) 0.15 (5 mins) 0.06 (15 mins)</div><div class="t" style="left:370.00px;top:482px;font-size:15.2px;line-height:15.2px;color:#1a1a1a;font-weight:bold;transform:scaleY(1.1);transform-origin:0 13px;">Real memory</div><div class="t" style="left:671.00px;top:482px;font-size:16px;line-height:16px;color:#1a1a1a;font-weight:normal;transform:scaleY(1.08);transform-origin:0 13px;">825.1 MiB used / 351.25 MiB cached / 62.72 GiB total</div><div class="t" style="left:1124.00px;top:482px;font-size:15.2px;line-height:15.2px;color:#1a1a1a;font-weight:bold;transform:scaleY(1.1);transform-origin:0 13px;">Local disk space</div><div class="t" style="left:1350.00px;top:482px;font-size:16px;line-height:16px;color:#1a1a1a;font-weight:normal;transform:scaleY(1.08);transform-origin:0 13px;">9.18 TiB used / 5.7 TiB free / 14.88 TiB total</div><div class="r" style="left:720px;top:295px;width:30px;height:16px;border:1px solid #e2e2e2;background:#fff"></div><svg class="r" style="left:720px;top:290px" width="40" height="25" viewBox="720 290 40 25"><rect x="731" y="298.1" width="10.7" height="11.6" rx="1.6" fill="#111"/><rect x="732.8" y="306.2" width="8.9" height="1.1" fill="#fff"/><rect x="733.6" y="300.6" width="5.6" height="0.8" fill="#fff" opacity="0.5"/></svg><div class="r" style="left:1398px;top:295px;width:37px;height:17px;border:1px solid #e2e2e2;background:#fff"></div><svg class="r" style="left:1410.5px;top:297.5px" width="13" height="13" viewBox="0 0 16 16"><path d="M7.8 0.4 C12.5 0.4 15.4 3.6 15.4 7.2 C15.4 9.6 13 9.4 11.6 9.3 C10 9.2 9.2 10.2 10 11.6 C10.8 13 10.3 15.2 7.8 15.2 C3.6 15.2 0.4 12 0.4 7.8 C0.4 3.6 3.6 0.4 7.8 0.4 Z" fill="#111"/><circle cx="4.2" cy="8" r="1.3" fill="#fff"/><circle cx="5.6" cy="4.2" r="1.3" fill="#fff"/><circle cx="9.4" cy="3.4" r="1.3" fill="#fff"/><circle cx="12.4" cy="5.8" r="1.3" fill="#fff"/></svg><div class="r" style="left:671px;top:405px;width:97.7px;height:20px;background:#e8e8e8;border-radius:1px"></div><div class="t" style="left:520.35px;width:400px;text-align:center;top:410px;font-size:12.25px;line-height:12.25px;color:#222;font-weight:normal;transform:scaleY(1.15);transform-origin:0 10px;">nvme0n1: 36 °C</div><div class="r" style="left:774.3px;top:405px;width:65.3px;height:20px;background:#e8e8e8;border-radius:1px"></div><div class="t" style="left:607.45px;width:400px;text-align:center;top:410px;font-size:12.25px;line-height:12.25px;color:#222;font-weight:normal;transform:scaleY(1.15);transform-origin:0 10px;">sda: 36 °C</div><div class="r" style="left:845px;top:405px;width:66.6px;height:20px;background:#e8e8e8;border-radius:1px"></div><div class="t" style="left:678.80px;width:400px;text-align:center;top:410px;font-size:12.25px;line-height:12.25px;color:#222;font-weight:normal;transform:scaleY(1.15);transform-origin:0 10px;">sdb: 36 °C</div><div class="r" style="left:917.2px;top:405px;width:65.3px;height:20px;background:#e8e8e8;border-radius:1px"></div><div class="t" style="left:750.35px;width:400px;text-align:center;top:410px;font-size:12.25px;line-height:12.25px;color:#222;font-weight:normal;transform:scaleY(1.15);transform-origin:0 10px;">sdc: 39 °C</div><div class="r" style="left:1350px;top:366px;width:39.6px;height:20px;background:#e8e8e8;border-radius:1px"></div><div class="t" style="left:1169.80px;width:400px;text-align:center;top:371px;font-size:12.25px;line-height:12.25px;color:#222;font-weight:normal;transform:scaleY(1.15);transform-origin:0 10px;">30 °C</div><div class="r" style="left:344px;top:536px;width:1545px;height:43px;background:#f4f4f4;border-right:1px solid #b0b0b0;border-bottom:1px solid #aaaaaa;border-left:1px solid #b8b8b8"></div><svg class="r" style="left:360px;top:549.8px" width="8" height="13" viewBox="0 0 8 13"><path d="M0.1 0.2 L6.9 6.1 L0.1 12 Z" fill="#bbbbbb"/></svg><div class="t" style="left:375.40px;top:547px;font-size:20px;line-height:20px;color:#111;font-weight:normal;">Stats History</div><div class="r" style="left:344px;top:586px;width:1545px;height:42px;background:#f4f4f4;border-right:1px solid #b0b0b0;border-bottom:1px solid #aaaaaa;border-left:1px solid #b8b8b8"></div><svg class="r" style="left:360px;top:599.8px" width="8" height="13" viewBox="0 0 8 13"><path d="M0.1 0.2 L6.9 6.1 L0.1 12 Z" fill="#bbbbbb"/></svg><div class="t" style="left:375.40px;top:597px;font-size:20px;line-height:20px;color:#111;font-weight:normal;">Recent Logins</div><div class="r" style="left:344px;top:635px;width:1545px;height:43px;background:#f4f4f4;border-right:1px solid #b0b0b0;border-bottom:1px solid #aaaaaa;border-left:1px solid #b8b8b8"></div><svg class="r" style="left:360px;top:648.8px" width="8" height="13" viewBox="0 0 8 13"><path d="M0.1 0.2 L6.9 6.1 L0.1 12 Z" fill="#bbbbbb"/></svg><div class="t" style="left:375.40px;top:646px;font-size:20px;line-height:20px;color:#111;font-weight:normal;">Network Interfaces</div><div class="r" style="left:344px;top:685px;width:1545px;height:225px;background:#fff;border-right:1px solid #b0b0b0;border-bottom:1px solid #aaaaaa;border-left:1px solid #b8b8b8;border-radius:0 0 2px 2px"></div><div class="r" style="left:345px;top:685px;width:1545px;height:42px;background:#f4f4f4;border-bottom:1px solid #e6e6e6"></div><svg class="r" style="left:354px;top:701px" width="14" height="8" viewBox="0 0 14 8"><path d="M0.5 0.5 H13 L6.75 7.2 Z" fill="#bbbbbb"/></svg><div class="t" style="left:375.40px;top:696px;font-size:20px;line-height:20px;color:#111;font-weight:normal;">Disk Usage</div><div class="r" style="left:361px;top:749px;width:1511px;height:137px;border:1px solid #e6e6e6;background:#fff"></div><div class="r" style="left:362px;top:790px;width:1510px;height:48px;background:#fafafa;border-top:1px solid #e6e6e6;border-bottom:1px solid #e6e6e6"></div><div class="t" style="left:366.70px;top:762px;font-size:17.3px;line-height:17.3px;color:#111;font-weight:normal;transform:scaleY(1.07);transform-origin:0 14px;">Mounted As</div><div class="t" style="left:618.20px;top:762px;font-size:17.3px;line-height:17.3px;color:#111;font-weight:normal;transform:scaleY(1.07);transform-origin:0 14px;">Type</div><div class="t" style="left:870.10px;top:762px;font-size:17.3px;line-height:17.3px;color:#111;font-weight:normal;transform:scaleY(1.07);transform-origin:0 14px;">Free</div><div class="t" style="left:1122.00px;top:762px;font-size:17.3px;line-height:17.3px;color:#111;font-weight:normal;transform:scaleY(1.07);transform-origin:0 14px;">Used</div><div class="t" style="left:1374.10px;top:762px;font-size:17.3px;line-height:17.3px;color:#111;font-weight:normal;transform:scaleY(1.07);transform-origin:0 14px;">Total</div><div class="t" style="left:1626.30px;top:762px;font-size:17.3px;line-height:17.3px;color:#111;font-weight:normal;transform:scaleY(1.07);transform-origin:0 14px;">Device ID</div><div class="t" style="left:367.20px;top:808px;font-size:16.5px;line-height:16.5px;color:#111;font-weight:normal;transform:scaleY(1.08);transform-origin:0 14px;">/</div><div class="t" style="left:367.20px;top:856px;font-size:16.5px;line-height:16.5px;color:#111;font-weight:normal;transform:scaleY(1.08);transform-origin:0 14px;">/storage</div><div class="t" style="left:618.70px;top:808px;font-size:16.5px;line-height:16.5px;color:#111;font-weight:normal;transform:scaleY(1.08);transform-origin:0 14px;">ext4</div><div class="t" style="left:618.70px;top:856px;font-size:16.5px;line-height:16.5px;color:#111;font-weight:normal;transform:scaleY(1.08);transform-origin:0 14px;">zfs</div><div class="t" style="left:870.60px;top:796px;font-size:16px;line-height:16px;color:#111;font-weight:normal;transform:scaleY(1.08);transform-origin:0 13px;"><span style="color:#3c763d">95%</span> (413.79 GiB)</div><div class="t" style="left:870.60px;top:819px;font-size:16px;line-height:16px;color:#111;font-weight:normal;transform:scaleY(1.08);transform-origin:0 13px;"><span style="color:#3c763d">99%</span> (29960567 inodes)</div><div class="t" style="left:870.60px;top:845px;font-size:16px;line-height:16px;color:#111;font-weight:normal;transform:scaleY(1.08);transform-origin:0 13px;"><span style="color:#8a6d3b">36%</span> (5.29 TiB)</div><div class="t" style="left:870.60px;top:867px;font-size:16px;line-height:16px;color:#111;font-weight:normal;transform:scaleY(1.08);transform-origin:0 13px;"><span style="color:#8a6d3b">100%</span> (11377292858 inodes)</div><div class="t" style="left:1122.50px;top:796px;font-size:16px;line-height:16px;color:#111;font-weight:normal;transform:scaleY(1.08);transform-origin:0 13px;">20.28 GiB</div><div class="t" style="left:1122.50px;top:819px;font-size:16px;line-height:16px;color:#111;font-weight:normal;transform:scaleY(1.08);transform-origin:0 13px;">571017 inodes</div><div class="t" style="left:1122.50px;top:845px;font-size:16px;line-height:16px;color:#111;font-weight:normal;transform:scaleY(1.08);transform-origin:0 13px;">9.13 TiB</div><div class="t" style="left:1122.50px;top:867px;font-size:16px;line-height:16px;color:#111;font-weight:normal;transform:scaleY(1.08);transform-origin:0 13px;">701468 inodes</div><div class="t" style="left:1374.60px;top:796px;font-size:16px;line-height:16px;color:#111;font-weight:normal;transform:scaleY(1.08);transform-origin:0 13px;">457.38 GiB</div><div class="t" style="left:1374.60px;top:819px;font-size:16px;line-height:16px;color:#111;font-weight:normal;transform:scaleY(1.08);transform-origin:0 13px;">30531584 inodes</div><div class="t" style="left:1374.60px;top:845px;font-size:16px;line-height:16px;color:#111;font-weight:normal;transform:scaleY(1.08);transform-origin:0 13px;">14.43 TiB</div><div class="t" style="left:1374.60px;top:867px;font-size:16px;line-height:16px;color:#111;font-weight:normal;transform:scaleY(1.08);transform-origin:0 13px;">11377994326 inodes</div><div class="t" style="left:1626.80px;top:808px;font-size:16.5px;line-height:16.5px;color:#111;font-weight:normal;transform:scaleY(1.08);transform-origin:0 14px;">/dev/root</div><div class="t" style="left:1626.80px;top:856px;font-size:16.5px;line-height:16.5px;color:#111;font-weight:normal;transform:scaleY(1.08);transform-origin:0 14px;">storage</div><div class="r" style="left:1910px;top:0;width:10px;height:940px;background:#d3d3d3"></div><div class="r" style="left:1910px;top:111px;width:10px;height:752px;background:#8e8e8e"></div><div class="r" style="left:1875px;top:70px;width:45px;height:41px;background:#033d87"></div><svg class="r" style="left:1880px;top:70px" width="40" height="41" viewBox="1880 70 40 41"><path fill="#fff" d="M1898.6 78.9 L1900.4 81 Q1905.3 82.4 1905.3 87.4 L1905.6 91.8 Q1906.4 95 1909.7 97.6 Q1910.2 99.4 1908.6 99.4 H1888.6 Q1887 99.4 1887.5 97.6 Q1890.8 95 1891.6 91.8 L1891.9 87.4 Q1891.9 82.4 1896.8 81 Z M1894.8 99.6 H1902.4 Q1902.4 102.8 1898.6 102.8 Q1894.8 102.8 1894.8 99.6 Z"/></svg>
</body></html>
